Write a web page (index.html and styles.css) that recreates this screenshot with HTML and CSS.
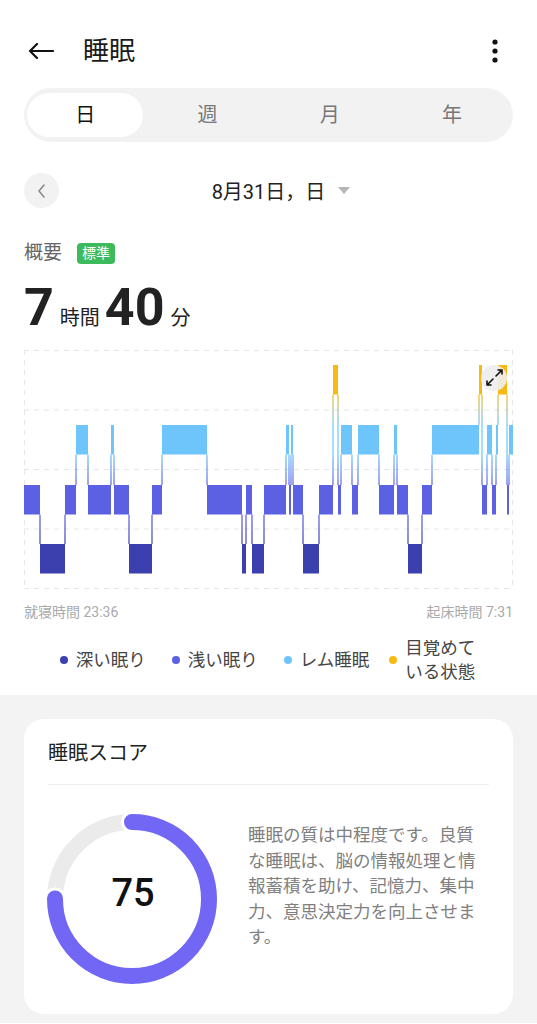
FILE: index.html
```html
<!DOCTYPE html>
<html lang="ja">

<head>
    <meta charset="UTF-8">
    <meta name="viewport" content="width=device-width, initial-scale=1.0">
    <title>睡眠</title>
    <link rel="stylesheet" href="styles.css">
</head>

<body>
    <header class="topbar">
        <svg class="back" width="26" height="16" viewBox="0 0 26 16">
            <path d="M2 8 H25 M9 1 L2 8 L9 15" fill="none" stroke="#111" stroke-width="2.2" stroke-linecap="round" stroke-linejoin="round"/>
        </svg>
        <h1 class="title">睡眠</h1>
        <svg class="more" width="24" height="24" viewBox="0 0 24 24">
            <circle cx="12" cy="3" r="2.6" fill="#111"/>
            <circle cx="12" cy="12" r="2.6" fill="#111"/>
            <circle cx="12" cy="21" r="2.6" fill="#111"/>
        </svg>
    </header>

    <nav class="tabs">
        <span class="tab active">日</span>
        <span class="tab">週</span>
        <span class="tab">月</span>
        <span class="tab">年</span>
    </nav>

    <div class="date-row">
        <span class="prev">
            <svg width="10" height="14" viewBox="0 0 10 14">
                <path d="M7 1 L2 7 L7 13" fill="none" stroke="#888" stroke-width="1.5" stroke-linecap="round" stroke-linejoin="round"/>
            </svg>
        </span>
        <span class="date">8月31日，日</span>
        <span class="caret"></span>
    </div>

    <section class="summary">
        <div class="summary-label">概要<span class="badge">標準</span></div>
        <div class="duration">7<span class="unit">時間</span>40<span class="unit">分</span></div>

        <svg class="chart" id="chart" width="489" height="239" viewBox="24 350 489 239">
            <defs>
                <linearGradient id="conn" gradientUnits="userSpaceOnUse" x1="0" y1="365" x2="0" y2="573">
                    <stop offset="0.139" stop-color="#f7b914"/>
                    <stop offset="0.288" stop-color="#6ec5fb"/>
                    <stop offset="0.428" stop-color="#6ec5fb"/>
                    <stop offset="0.577" stop-color="#5c60e3"/>
                    <stop offset="0.716" stop-color="#5c60e3"/>
                    <stop offset="0.861" stop-color="#3b40ae"/>
                </linearGradient>
            </defs>
            <g class="grid">
                <line x1="24" y1="350.5" x2="513" y2="350.5"/>
                <line x1="24" y1="410" x2="513" y2="410"/>
                <line x1="24" y1="469.5" x2="513" y2="469.5"/>
                <line x1="24" y1="529" x2="513" y2="529"/>
                <line x1="24" y1="588.5" x2="513" y2="588.5"/>
                <line x1="24.5" y1="350" x2="24.5" y2="589"/>
                <line x1="512.5" y1="350" x2="512.5" y2="589"/>
            </g>
            <g id="stages"></g>
            <g class="expand">
                <circle cx="494" cy="378" r="13" fill="#eeeeee" fill-opacity="0.92"/>
                <path d="M493 379 L487 385 M487 381 L487 385 L491 385 M496 376 L502 370 M498 370 L502 370 L502 374" fill="none" stroke="#111" stroke-width="1.6" stroke-linecap="round" stroke-linejoin="round"/>
            </g>
        </svg>

        <div class="times">
            <span>就寝時間 23:36</span>
            <span>起床時間 7:31</span>
        </div>

        <div class="legend">
            <div class="legend-item"><span class="dot deep"></span><span>深い眠り</span></div>
            <div class="legend-item"><span class="dot light"></span><span>浅い眠り</span></div>
            <div class="legend-item"><span class="dot rem"></span><span>レム睡眠</span></div>
            <div class="legend-item"><span class="dot awake"></span><span class="wrap">目覚めている状態</span></div>
        </div>
    </section>

    <section class="scores">
        <div class="card">
            <h2>睡眠スコア</h2>
            <div class="score-body">
                <svg class="ring" width="170" height="170" viewBox="0 0 170 170">
                    <circle cx="85" cy="85" r="77" fill="none" stroke="#ebebeb" stroke-width="16"/>
                    <circle cx="85" cy="85" r="77" fill="none" stroke="#fff" stroke-width="22" stroke-linecap="round"
                        stroke-dasharray="362.9 483.8" transform="rotate(-90 85 85)"/>
                    <circle cx="85" cy="85" r="77" fill="none" stroke="#7267f4" stroke-width="16" stroke-linecap="round"
                        stroke-dasharray="362.9 483.8" transform="rotate(-90 85 85)"/>
                    <text x="86" y="92" text-anchor="middle" class="score">75</text>
                </svg>
                <p class="desc">睡眠の質は中程度です。良質な睡眠は、脳の情報処理と情報蓄積を助け、記憶力、集中力、意思決定力を向上させます。</p>
            </div>
        </div>
    </section>

    <script>
        // stage, start x, end x (chart coords)
        const segments = [
            ['L', 24, 40], ['D', 40, 65], ['L', 65, 76], ['R', 76, 88], ['L', 88, 111],
            ['R', 111, 114], ['L', 114, 129], ['D', 129, 152], ['L', 152, 162], ['R', 162, 207],
            ['L', 207, 242], ['D', 242, 246], ['L', 246, 252], ['D', 252, 264], ['L', 264, 286],
            ['R', 286, 289], ['L', 289, 291], ['R', 291, 293], ['L', 293, 303], ['D', 303, 319],
            ['L', 319, 333], ['A', 333, 338], ['L', 338, 341], ['R', 341, 352], ['L', 352, 358],
            ['R', 358, 379], ['L', 379, 394], ['R', 394, 397], ['L', 397, 408], ['D', 408, 422],
            ['L', 422, 432], ['R', 432, 479], ['A', 479, 482], ['L', 482, 487], ['R', 487, 492],
            ['L', 492, 496], ['R', 496, 498], ['A', 498, 507], ['L', 507, 509], ['R', 509, 513]
        ];
        const bands = {
            A: { top: 365, color: '#f7b914' },
            R: { top: 425, color: '#6ec5fb' },
            L: { top: 485, color: '#5c60e3' },
            D: { top: 544, color: '#3b40ae' }
        };
        const barHeight = 29.5;
        const ns = 'http://www.w3.org/2000/svg';
        const group = document.getElementById('stages');

        segments.forEach(([stage, x0, x1]) => {
            const rect = document.createElementNS(ns, 'rect');
            rect.setAttribute('x', x0);
            rect.setAttribute('y', bands[stage].top);
            rect.setAttribute('width', x1 - x0);
            rect.setAttribute('height', barHeight);
            rect.setAttribute('fill', bands[stage].color);
            group.appendChild(rect);
        });

        segments.forEach(([stage, x0], i) => {
            if (i === 0) return;
            const prev = bands[segments[i - 1][0]];
            const cur = bands[stage];
            const line = document.createElementNS(ns, 'line');
            line.setAttribute('x1', x0);
            line.setAttribute('x2', x0);
            line.setAttribute('y1', Math.min(prev.top, cur.top) + barHeight);
            line.setAttribute('y2', Math.max(prev.top, cur.top));
            line.setAttribute('stroke', 'url(#conn)');
            line.setAttribute('stroke-width', '1.2');
            group.appendChild(line);
        });
    </script>
</body>

</html>
```

FILE: styles.css
```css
body {
    margin: 0;
    font-family: Roboto, "Noto Sans CJK JP", sans-serif;
    color: #222;
    background: #fff;
}

.topbar {
    display: flex;
    align-items: center;
    height: 48px;
    margin-top: 27px;
    padding: 0 30px 0 28px;
}

.title {
    flex: 1;
    margin: 0 0 0 29px;
    font-size: 26px;
    font-weight: 400;
    line-height: 1;
    color: #1a1a1a;
}

.tabs {
    display: grid;
    grid-template-columns: repeat(4, 1fr);
    margin: 13px 24px 0;
    padding: 5px 0;
    background: #f2f2f2;
    border-radius: 27px;
}

.tab {
    margin: 0 3px;
    height: 44px;
    line-height: 44px;
    text-align: center;
    font-size: 20px;
    color: #777;
    border-radius: 22px;
}

.tab.active {
    background: #fff;
    color: #111;
}

.date-row {
    display: grid;
    grid-template-columns: 1fr auto 1fr;
    align-items: center;
    height: 35px;
    margin: 31px 24px 0;
}

.prev {
    display: flex;
    align-items: center;
    justify-content: center;
    width: 35px;
    height: 35px;
    border-radius: 50%;
    background: #f2f2f2;
}

.date {
    font-size: 20px;
    color: #222;
}

.caret {
    justify-self: start;
    margin-left: 13px;
    width: 0;
    height: 0;
    border-left: 6px solid transparent;
    border-right: 6px solid transparent;
    border-top: 7px solid #b5b5b5;
}

.summary {
    padding: 0 24px;
}

.summary-label {
    display: flex;
    align-items: center;
    margin-top: 33px;
    font-size: 19px;
    line-height: 24px;
    color: #666;
}

.badge {
    margin-left: 15px;
    padding: 0 5px;
    font-size: 14px;
    line-height: 21px;
    color: #fff;
    background: #3dba5b;
    border-radius: 4px;
}

.duration {
    margin-top: 17px;
    font-size: 52px;
    font-weight: 700;
    line-height: 52px;
    color: #222;
}

.unit {
    margin: 0 5px 0 6px;
    font-size: 20px;
    font-weight: 400;
    line-height: 1;
}

.chart {
    display: block;
    margin-top: 16px;
}

.grid line {
    stroke: #e6e6e6;
    stroke-width: 1;
    stroke-dasharray: 5 5;
}

.times {
    display: flex;
    justify-content: space-between;
    margin-top: 13px;
    font-size: 14px;
    line-height: 20px;
    color: #aaa;
}

.legend {
    display: flex;
    justify-content: center;
    align-items: center;
    gap: 26px;
    height: 40px;
    margin: 18px 0 15px;
    overflow: hidden;
    font-size: 17.5px;
    line-height: 24px;
    color: #444;
}

.legend-item {
    display: flex;
    align-items: center;
    gap: 8px;
}

.legend-item:last-child {
    margin-left: -6px;
}

.legend-item .wrap {
    width: 72px;
}

.dot {
    width: 8px;
    height: 8px;
    border-radius: 50%;
}

.dot.deep {
    background: #3b40ae;
}

.dot.light {
    background: #5c60e3;
}

.dot.rem {
    background: #6ec5fb;
}

.dot.awake {
    background: #f7b914;
}

.scores {
    padding: 24px 24px 9px;
    background: #f3f3f3;
}

.card {
    padding: 20px 24px 30px;
    background: #fff;
    border-radius: 20px;
}

.card h2 {
    margin: 0;
    padding-bottom: 17px;
    font-size: 20px;
    font-weight: 400;
    line-height: 28px;
    color: #222;
    border-bottom: 1px solid #eee;
}

.score-body {
    display: flex;
    align-items: flex-start;
    margin-top: 29px;
}

.ring {
    flex: none;
    margin-left: -1px;
}

.score {
    font-family: Roboto, sans-serif;
    font-size: 38px;
    font-weight: 500;
    fill: #111;
}

.desc {
    width: 235px;
    margin: 9px 0 0 31px;
    font-size: 17.5px;
    line-height: 25.6px;
    color: #808080;
}
```
